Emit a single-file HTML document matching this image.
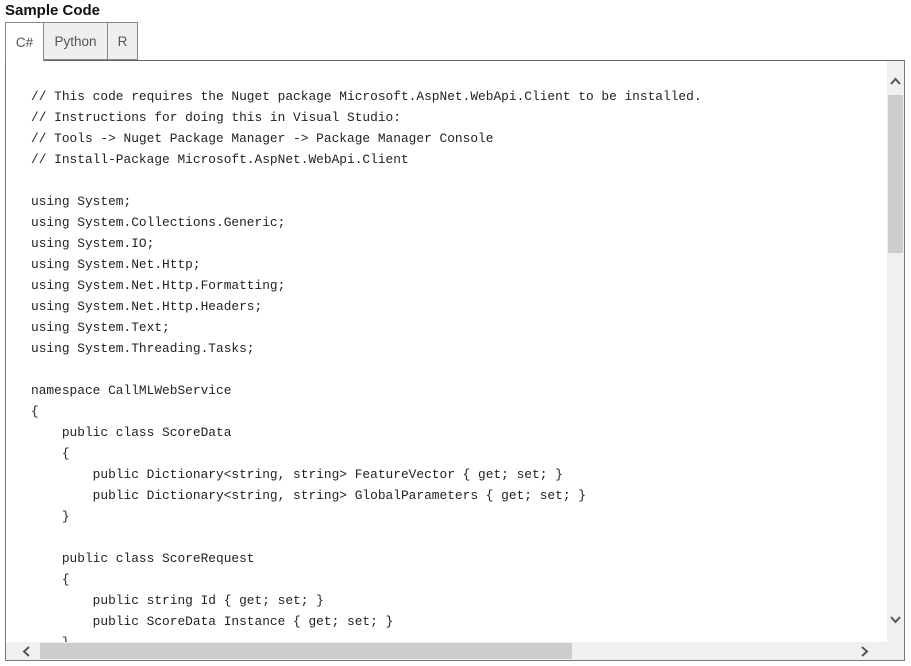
<!DOCTYPE html>
<html><head><meta charset="utf-8"><style>
body{margin:0;width:911px;height:666px;background:#fff;position:relative;overflow:hidden;font-family:"Liberation Sans",sans-serif}
.title{position:absolute;left:5px;top:2px;font-weight:bold;font-size:15px;color:#111}
.tab{position:absolute;top:22px;height:38px;box-sizing:border-box;border:1px solid #888;font-size:13.5px;color:#555;display:flex;align-items:center;justify-content:center;background:#efefef}
.panel{position:absolute;left:5px;top:60px;width:900px;height:601px;box-sizing:border-box;border:1px solid #777;border-top-color:#666}
pre{position:absolute;left:31px;top:86px;margin:0;font-family:"Liberation Mono",monospace;font-size:12.85px;line-height:21px;color:#222}
.vs{position:absolute;left:887px;top:61px;width:17px;height:581px;background:#f0f0f0}
.vt{position:absolute;left:888px;top:95px;width:15px;height:158px;background:#cdcdcd}
.hs{position:absolute;left:6px;top:642px;width:898px;height:18px;background:#f0f0f0}
.ht{position:absolute;left:40px;top:643px;width:532px;height:16px;background:#cdcdcd}
svg{position:absolute}
</style></head><body>
<div class="title">Sample Code</div>
<div class="panel"></div>
<div class="tab" style="left:5px;width:39px;background:#fff;border-bottom:none;height:39px">C#</div>
<div class="tab" style="left:43px;width:65px">Python</div>
<div class="tab" style="left:107px;width:31px">R</div>
<pre>// This code requires the Nuget package Microsoft.AspNet.WebApi.Client to be installed.
// Instructions for doing this in Visual Studio:
// Tools -&gt; Nuget Package Manager -&gt; Package Manager Console
// Install-Package Microsoft.AspNet.WebApi.Client

using System;
using System.Collections.Generic;
using System.IO;
using System.Net.Http;
using System.Net.Http.Formatting;
using System.Net.Http.Headers;
using System.Text;
using System.Threading.Tasks;

namespace CallMLWebService
{
    public class ScoreData
    {
        public Dictionary&lt;string, string&gt; FeatureVector { get; set; }
        public Dictionary&lt;string, string&gt; GlobalParameters { get; set; }
    }

    public class ScoreRequest
    {
        public string Id { get; set; }
        public ScoreData Instance { get; set; }
    }</pre>
<div class="vs"></div><div class="vt"></div>
<div class="hs"></div><div class="ht"></div>
<svg style="left:889px;top:76px" width="13" height="10"><path d="M2 8 L6.5 3 L11 8" stroke="#555" stroke-width="2" fill="none"/></svg>
<svg style="left:889px;top:615px" width="13" height="10"><path d="M2 2 L6.5 7 L11 2" stroke="#555" stroke-width="2" fill="none"/></svg>
<svg style="left:21px;top:645px" width="10" height="13"><path d="M8 2 L3 6.5 L8 11" stroke="#555" stroke-width="2" fill="none"/></svg>
<svg style="left:860px;top:645px" width="10" height="13"><path d="M2 2 L7 6.5 L2 11" stroke="#555" stroke-width="2" fill="none"/></svg>
</body></html>
